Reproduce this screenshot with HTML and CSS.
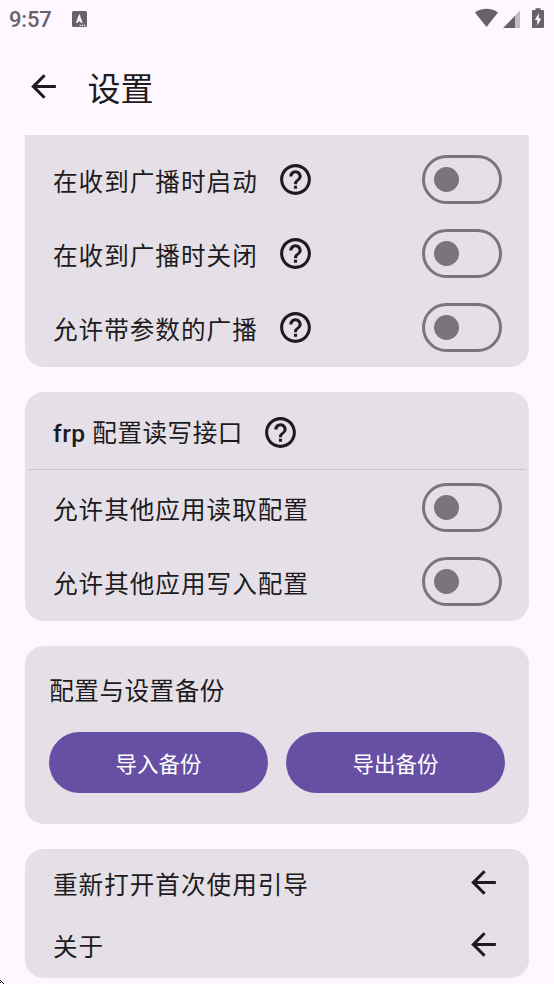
FILE: index.html
```html
<!DOCTYPE html>
<html lang="zh-CN">
<head>
<meta charset="utf-8">
<title>设置</title>
<link rel="stylesheet" href="styles.css">
</head>
<body>
<svg class="defs" width="0" height="0">
  <symbol id="back" viewBox="0 0 24 24"><path d="M20 11H7.83l5.59-5.59L12 4l-8 8 8 8 1.41-1.41L7.83 13H20z"/></symbol>
  <symbol id="help" viewBox="0 0 24 24"><path d="M11 18h2v-2h-2v2zm1-16C6.48 2 2 6.48 2 12s4.480 10 10 10 10-4.480 10-10S17.520 2 12 2zm0 18c-4.410 0-8-3.590-8-8s3.590-8 8-8 8 3.590 8 8-3.590 8-8 8zm0-14c-2.210 0-4 1.790-4 4h2c0-1.100.9-2 2-2s2 .9 2 2c0 2-3 1.750-3 5h2c0-2.250 3-2.500 3-5 0-2.210-1.790-4-4-4z"/></symbol>
</svg>
<div class="status">
  <span class="time">9:57</span>
  <svg class="ime" width="15" height="17" viewBox="0 0 15 17"><rect width="15" height="16" rx="1.500" fill="#666268"/><path d="M4.200 11.500 7.300 3.300l3.100 8.200H8.600L8.100 10H6.500L6 11.500zM6.900 8.600h.8L7.300 7z" fill="#fef7ff" stroke="#fef7ff" stroke-width=".4"/><path d="M7.500 14.300h1.300m.9 0H11m.9 0h1.300" stroke="#fef7ff" stroke-width="1.200"/></svg>
  <svg class="signals" width="72" height="22" viewBox="0 0 72 22"><g fill="#666268"><path d="M1 4.500C7.500-.4 17.500-.4 24 4.500L12.500 19z"/><path d="M29 20 41 7.800V20z"/><path d="M41 7.800 46 2.500V20h-5z" opacity=".4"/><path d="M61.500 .2h5V2H69q1 0 1 1v16q0 1-1 1H59q-1 0-1-1V3q0-1 1-1h2.500z"/></g><path d="M65 5 60.800 12h2.500V17.500l4-7h-2.600z" fill="#fef7ff"/></svg>
</div>
<header class="appbar"><svg class="icon"><use href="#back"/></svg><h1>设置</h1></header>
<main>
  <section class="card broadcast">
    <div class="row"><span>在收到广播时启动</span><svg class="icon"><use href="#help"/></svg><i class="switch"></i></div>
    <div class="row"><span>在收到广播时关闭</span><svg class="icon"><use href="#help"/></svg><i class="switch"></i></div>
    <div class="row"><span>允许带参数的广播</span><svg class="icon"><use href="#help"/></svg><i class="switch"></i></div>
  </section>
  <section class="card access">
    <div class="row heading"><span><b>frp</b> 配置读写接口</span><svg class="icon"><use href="#help"/></svg></div>
    <div class="row"><span>允许其他应用读取配置</span><i class="switch"></i></div>
    <div class="row"><span>允许其他应用写入配置</span><i class="switch"></i></div>
  </section>
  <section class="card backup">
    <h2>配置与设置备份</h2>
    <div class="buttons"><button>导入备份</button><button>导出备份</button></div>
  </section>
  <section class="card links">
    <div class="row"><span>重新打开首次使用引导</span><svg class="icon"><use href="#back"/></svg></div>
    <div class="row"><span>关于</span><svg class="icon"><use href="#back"/></svg></div>
  </section>
</main>
<svg class="corner" width="4" height="4" viewBox="0 0 4 4"><path d="M0 0h1v1H0zM1 1h1v1H1zM2 2h1v1H2zM3 3h1v1H3zM0 2h1v1H0z"/></svg>
</body>
</html>
```
FILE: styles.css
```css
* { box-sizing: border-box; }
body {
  margin: 0;
  height: 984px;
  overflow: hidden;
  position: relative;
  background: #fef7ff;
  color: #1d1b20;
  font-family: Roboto, "Noto Sans CJK SC", sans-serif;
}
.defs { position: absolute; }
.status { height: 37px; display: flex; align-items: flex-start; padding: 0 8px 0 9px; color: #666268; }
.time { width: 63px; font-size: 22px; line-height: 39px; font-weight: 500; letter-spacing: -.2px; }
.ime { margin-top: 11px; }
.signals { margin: 8px 0 0 auto; }
.appbar { height: 98px; display: flex; align-items: center; padding-left: 24.6px; }
.appbar h1 { margin: 7px 0 0 26px; font-size: 33px; line-height: 44px; font-weight: 400; }
.icon { width: 37px; height: 37px; fill: #1d1b20; flex: none; }
main { padding: 0 24.6px; display: flex; flex-direction: column; gap: 24.6px; }
.card { background: #e5e0e7; border-radius: 18.5px; }
.broadcast { height: 232px; margin-bottom: .5px; border-radius: 0 0 18.5px 18.5px; padding-top: 8px; }
.access { height: 229px; }
.backup { height: 178.5px; padding: 27px 24.6px 0; }
.links { height: 129px; padding-top: 3px; }
.row { height: 73.8px; padding: 0 27.5px 0 28.4px; display: flex; align-items: center; font-size: 24.6px; letter-spacing: 1px; }
.row span { line-height: 36px; padding-top: 7px; }
.row .icon { margin-left: 19px; }
.heading { height: 77.8px; margin: 0 3px .8px; padding: 4px 24.5px 0 25.4px; border-bottom: 1.5px solid #cac4d0; letter-spacing: .5px; }
.heading span { padding-top: 4px; }
.heading b { font-weight: 500; }
.switch { margin-left: auto; width: 80px; height: 49px; border: 3px solid #79747e; border-radius: 25px; display: flex; align-items: center; padding-left: 9px; }
.switch::before { content: ""; width: 25px; height: 25px; border-radius: 50%; background: #79747e; }
h2 { margin: 0; font-size: 24.6px; line-height: 38px; font-weight: 400; letter-spacing: .5px; }
.buttons { display: flex; gap: 18.5px; margin-top: 21px; }
button { flex: 1; height: 61.5px; border: 0; border-radius: 31px; padding: 5px 0 0; background: #6750a4; color: #fff; font: 400 21.5px/32px Roboto, "Noto Sans CJK SC", sans-serif; }
.links .row { height: 61.5px; }
.links .icon { margin-left: auto; }
.corner { position: absolute; left: 0; bottom: 0; }
```
